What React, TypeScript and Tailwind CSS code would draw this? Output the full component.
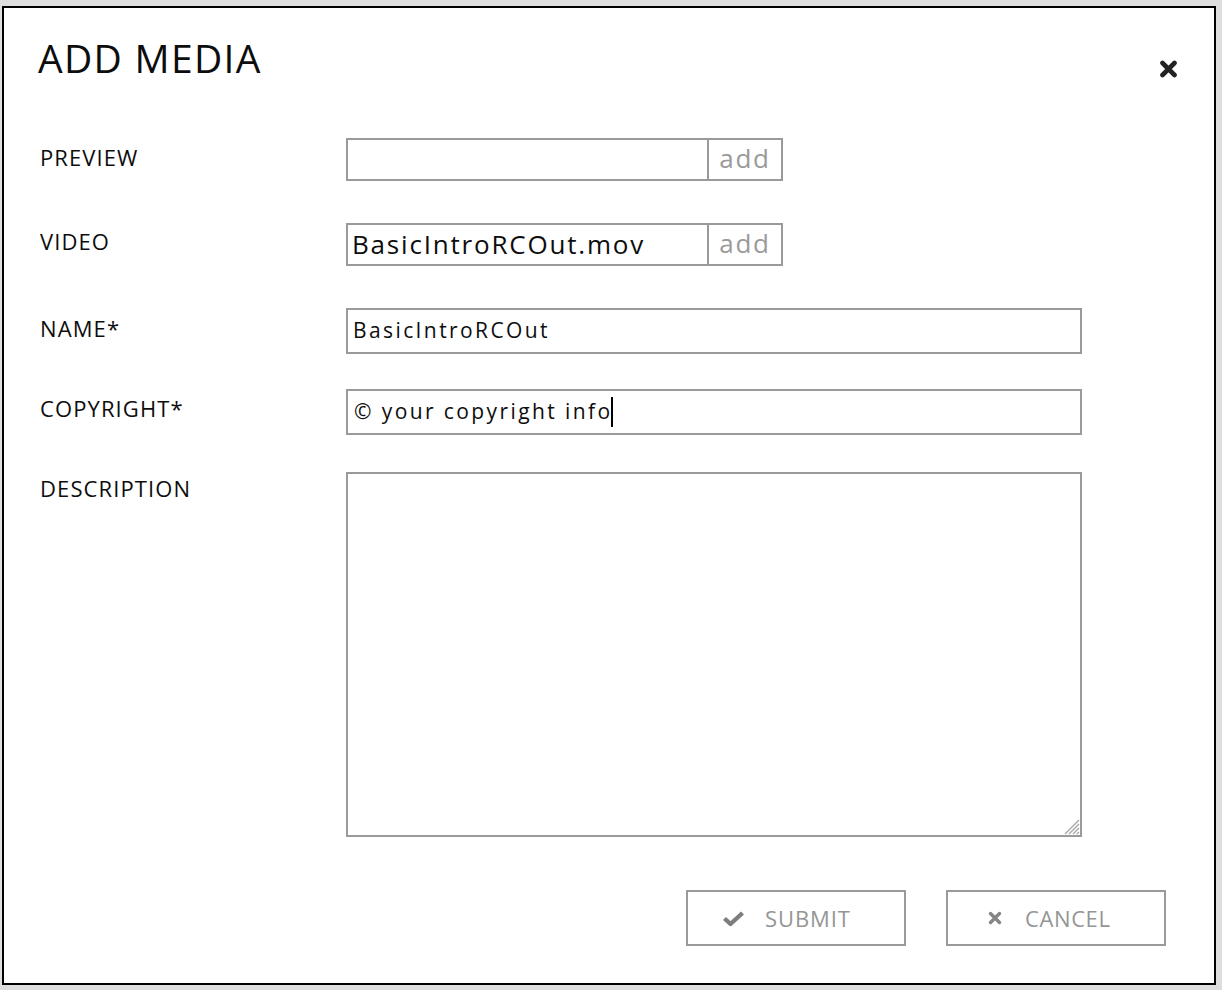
import React from "react";

const font = { fontFamily: '"Open Sans", "Liberation Sans", sans-serif' };

function CloseIcon() {
  return (
    <svg width="19" height="18" viewBox="0 0 19 18" className="block">
      <path d="M3.5 3 L15.5 15 M15.5 3 L3.5 15" stroke="#222" strokeWidth="4.6" strokeLinecap="round" fill="none" />
    </svg>
  );
}

function CheckIcon() {
  return (
    <svg width="23" height="17" viewBox="0 0 23 17" className="block">
      <path d="M2.5 8.5 L8.5 14 L20.5 3" stroke="#7d7d7d" strokeWidth="4.4" strokeLinejoin="round" fill="none" />
    </svg>
  );
}

function SmallX() {
  return (
    <svg width="14" height="14" viewBox="0 0 14 14" className="block">
      <path d="M2.5 2.5 L11.5 11.5 M11.5 2.5 L2.5 11.5" stroke="#858585" strokeWidth="3.4" strokeLinecap="round" fill="none" />
    </svg>
  );
}

function ResizeGrip() {
  return (
    <svg width="20" height="20" viewBox="0 0 20 20" className="absolute right-0 bottom-0">
      <path d="M19 5 L5 19 M19 9 L9 19 M19 13 L13 19 M19 17 L17 19" stroke="#a8a8a8" strokeWidth="1.4" fill="none" />
    </svg>
  );
}

function Label({ text, top = "mt-[8px]" }: { text: string; top?: string }) {
  return (
    <div className={`w-[306px] shrink-0 ${top} text-[22px] leading-[22px] tracking-[1.1px] font-medium text-[#0d0d0d]`}>{text}</div>
  );
}

function FileField({ value }: { value?: string }) {
  return (
    <div className="flex h-[43px]">
      <div className="w-[363px] h-full border-2 border-[#9a9a9a] flex items-center pl-[4px] text-[26px] tracking-[1.8px] text-[#0d0d0d] whitespace-nowrap overflow-hidden">
        {value}
      </div>
      <div className="w-[74px] h-full border-2 border-l-0 border-[#9a9a9a] flex items-center justify-center text-[26px] tracking-[1.8px] text-[#9a9a9a] pb-[2px]">
        add
      </div>
    </div>
  );
}

export default function App() {
  return (
    <div className="w-[1222px] h-[990px] bg-[#dedede] pt-[6px] pl-[2px] overflow-hidden" style={font}>
      <div className="w-[1214px] h-[979px] border-2 border-black bg-white flex flex-col">
        {/* header */}
        <div className="flex justify-between items-start pt-[30px] pl-[34px] pr-[36px]">
          <h1 className="text-[39px] leading-[39px] tracking-[1.3px] font-medium text-[#0d0d0d]">ADD MEDIA</h1>
          <button className="mt-[22px]">
            <CloseIcon />
          </button>
        </div>

        <div className="flex flex-col pl-[36px]">
          <div className="flex items-start mt-[60px]">
            <Label text="PREVIEW" />
            <FileField />
          </div>

          <div className="flex items-start mt-[42px]">
            <Label text="VIDEO" top="mt-[7px]" />
            <FileField value="BasicIntroRCOut.mov" />
          </div>

          <div className="flex items-start mt-[42px]">
            <Label text="NAME*" top="mt-[9px]" />
            <div className="w-[736px] h-[46px] border-2 border-[#9a9a9a] flex items-center pl-[5px] text-[21px] tracking-[2.4px] text-[#0d0d0d]">
              BasicIntroRCOut
            </div>
          </div>

          <div className="flex items-start mt-[35px]">
            <Label text="COPYRIGHT*" />
            <div className="w-[736px] h-[46px] border-2 border-[#9a9a9a] flex items-center pl-[6px] text-[21px] tracking-[2.4px] text-[#0d0d0d]">
              <span>© your copyright info</span>
              <span className="w-[2px] h-[30px] bg-black -ml-[1px]" />
            </div>
          </div>

          <div className="flex items-start mt-[37px]">
            <Label text="DESCRIPTION" top="mt-[5px]" />
            <div className="relative w-[736px] h-[365px] border-2 border-[#9a9a9a]">
              <ResizeGrip />
            </div>
          </div>
        </div>

        {/* actions */}
        <div className="flex justify-end gap-[40px] pr-[48px] mt-[53px]">
          <button className="w-[220px] h-[56px] border-2 border-[#9a9a9a] flex items-center pl-[34px] gap-[20px] text-[22px] tracking-[0.9px] text-[#959595]">
            <CheckIcon />
            <span>SUBMIT</span>
          </button>
          <button className="w-[220px] h-[56px] border-2 border-[#9a9a9a] flex items-center pl-[40px] gap-[23px] text-[22px] tracking-[0.6px] text-[#959595]">
            <SmallX />
            <span>CANCEL</span>
          </button>
        </div>
      </div>
    </div>
  );
}
